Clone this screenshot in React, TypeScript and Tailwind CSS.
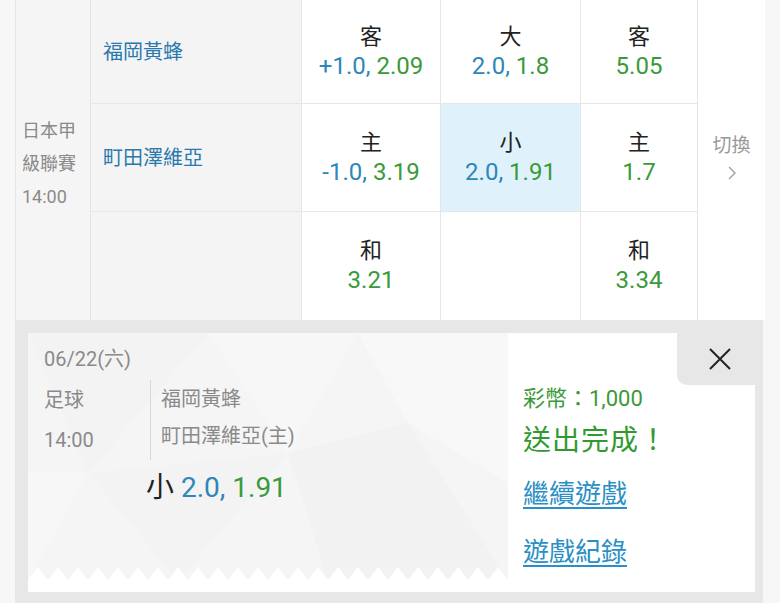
import React from "react";

const font = { fontFamily: 'Roboto, "Noto Sans CJK TC", sans-serif' };

type Cell = { label?: string; line?: string; odds?: string; active?: boolean };

const rows: { team: string; cells: Cell[] }[] = [
  {
    team: "福岡黃蜂",
    cells: [
      { label: "客", line: "+1.0", odds: "2.09" },
      { label: "大", line: "2.0", odds: "1.8" },
      { label: "客", odds: "5.05" },
    ],
  },
  {
    team: "町田澤維亞",
    cells: [
      { label: "主", line: "-1.0", odds: "3.19" },
      { label: "小", line: "2.0", odds: "1.91", active: true },
      { label: "主", odds: "1.7" },
    ],
  },
  {
    team: "",
    cells: [{ label: "和", odds: "3.21" }, {}, { label: "和", odds: "3.34" }],
  },
];

function OddsCell({ c, w }: { c: Cell; w: string }) {
  return (
    <div
      className={`${w} flex flex-col items-center justify-center border-r border-[#e6e6e6] ${
        c.active ? "bg-[#dff1fb]" : "bg-white"
      }`}
    >
      {c.label && (
        <>
          <div className="text-[22px] leading-[28px] text-[#222]">{c.label}</div>
          <div className="text-[24px] leading-[30px]">
            {c.line && <span className="text-[#2f86b8]">{c.line}, </span>}
            <span className="text-[#3a9a3a]">{c.odds}</span>
          </div>
        </>
      )}
    </div>
  );
}

export default function App() {
  const widths = ["w-[139px]", "w-[140px]", "w-[117px]"];
  return (
    <div className="w-[780px] h-[603px] bg-[#f7f7f7] overflow-hidden" style={font}>
      {/* Match table */}
      <div className="ml-[15px] w-[750px] h-[320px] flex border-l border-[#e4e4e4]">
        <div className="w-[75px] bg-[#f5f5f5] border-r border-[#e4e4e4] flex flex-col justify-center pl-[6px] text-[18px] leading-[33px] text-[#8a8a8a] pt-[6px]">
          <div>日本甲</div>
          <div>級聯賽</div>
          <div>14:00</div>
        </div>
        <div className="flex flex-col">
          {rows.map((r, i) => (
            <div
              key={i}
              className={`flex ${i === 0 ? "h-[104px]" : "h-[108px]"} ${
                i < 2 ? "border-b border-[#e6e6e6]" : ""
              }`}
            >
              <div className="w-[211px] bg-[#f4f4f4] border-r border-[#e6e6e6] flex items-center pl-[12px] text-[20px] text-[#2a79ad]">
                {r.team}
              </div>
              {r.cells.map((c, j) => (
                <OddsCell key={j} c={c} w={widths[j]} />
              ))}
            </div>
          ))}
        </div>
        <div className="flex-1 bg-white flex flex-col items-center justify-center text-[#9a9a9a] pb-[6px]">
          <div className="text-[19px] leading-[26px] whitespace-nowrap">切換</div>
          <svg width="10" height="16" viewBox="0 0 10 16" className="mt-[6px]">
            <path d="M2 2 L8 8 L2 14" fill="none" stroke="#a8a8a8" strokeWidth="1.5" />
          </svg>
        </div>
      </div>

      {/* Bet receipt overlay */}
      <div className="ml-[15px] w-[748px] h-[283px] bg-[#e7e7e7] pt-[13px] pl-[13px]">
        <div className="w-[727px] h-[259px] flex bg-white">
          <div className="relative w-[480px] h-full bg-white overflow-hidden">
            <svg className="absolute inset-0" width="480" height="259" viewBox="0 0 480 259">
              <rect x="0" y="0" width="480" height="248" fill="#f5f5f5" />
              <polygon points="0,0 180,0 60,140" fill="#f3f3f3" />
              <polygon points="180,0 330,0 260,120" fill="#f7f7f7" />
              <polygon points="60,140 260,120 150,248" fill="#f3f3f3" />
              <polygon points="330,0 480,0 480,150 380,90" fill="#f8f8f8" />
              <polygon points="260,120 380,90 480,248 300,248" fill="#f2f2f2" />
              <polygon points="0,140 60,140 0,248" fill="#f7f7f7" />
              <path
                d={
                  "M0 246 " +
                  Array.from({ length: 24 })
                    .map((_, k) => `L${k * 20 + 10} 234 L${k * 20 + 20} 247`)
                    .join(" ") +
                  " L480 259 L0 259 Z"
                }
                fill="#ffffff"
              />
            </svg>
            <div className="relative pl-[16px] pt-[12px] text-[#8a8a8a]">
              <div className="text-[20px] leading-[28px]">06/22(六)</div>
              <div className="flex mt-[9px]">
                <div className="w-[107px] border-r border-[#d8d8d8] text-[20px] leading-[40px] -mt-[2px]">
                  <div>足球</div>
                  <div>14:00</div>
                </div>
                <div className="pl-[10px] text-[20px] leading-[37px] -mt-[1px]">
                  <div>福岡黃蜂</div>
                  <div>町田澤維亞(主)</div>
                </div>
              </div>
              <div className="ml-[102px] mt-[10px] text-[28px] leading-[36px]">
                <span className="text-[#222]">小 </span>
                <span className="text-[#2f86b8]">2.0, </span>
                <span className="text-[#3a9a3a]">1.91</span>
              </div>
            </div>
          </div>
          <div className="relative flex-1 bg-white pl-[15px]">
            <div className="absolute right-0 top-0 w-[78px] h-[52px] bg-[#e7e7e7] rounded-bl-[10px] flex items-center justify-center pl-[8px]">
              <svg width="24" height="24" viewBox="0 0 24 24">
                <path d="M2 2 L22 22 M22 2 L2 22" stroke="#222" strokeWidth="2" />
              </svg>
            </div>
            <div className="pt-[51px] text-[22px] leading-[30px] text-[#3a9a3a]">彩幣：1,000</div>
            <div className="mt-[9px] text-[28px] leading-[36px] text-[#2f9a2f] tracking-[1px]">
              送出完成！
            </div>
            <div className="mt-[18px] text-[26px] leading-[34px] text-[#2a8fc4] underline underline-offset-[4px]">
              繼續遊戲
            </div>
            <div className="mt-[24px] text-[26px] leading-[34px] text-[#2a8fc4] underline underline-offset-[4px]">
              遊戲紀錄
            </div>
          </div>
        </div>
      </div>
    </div>
  );
}
